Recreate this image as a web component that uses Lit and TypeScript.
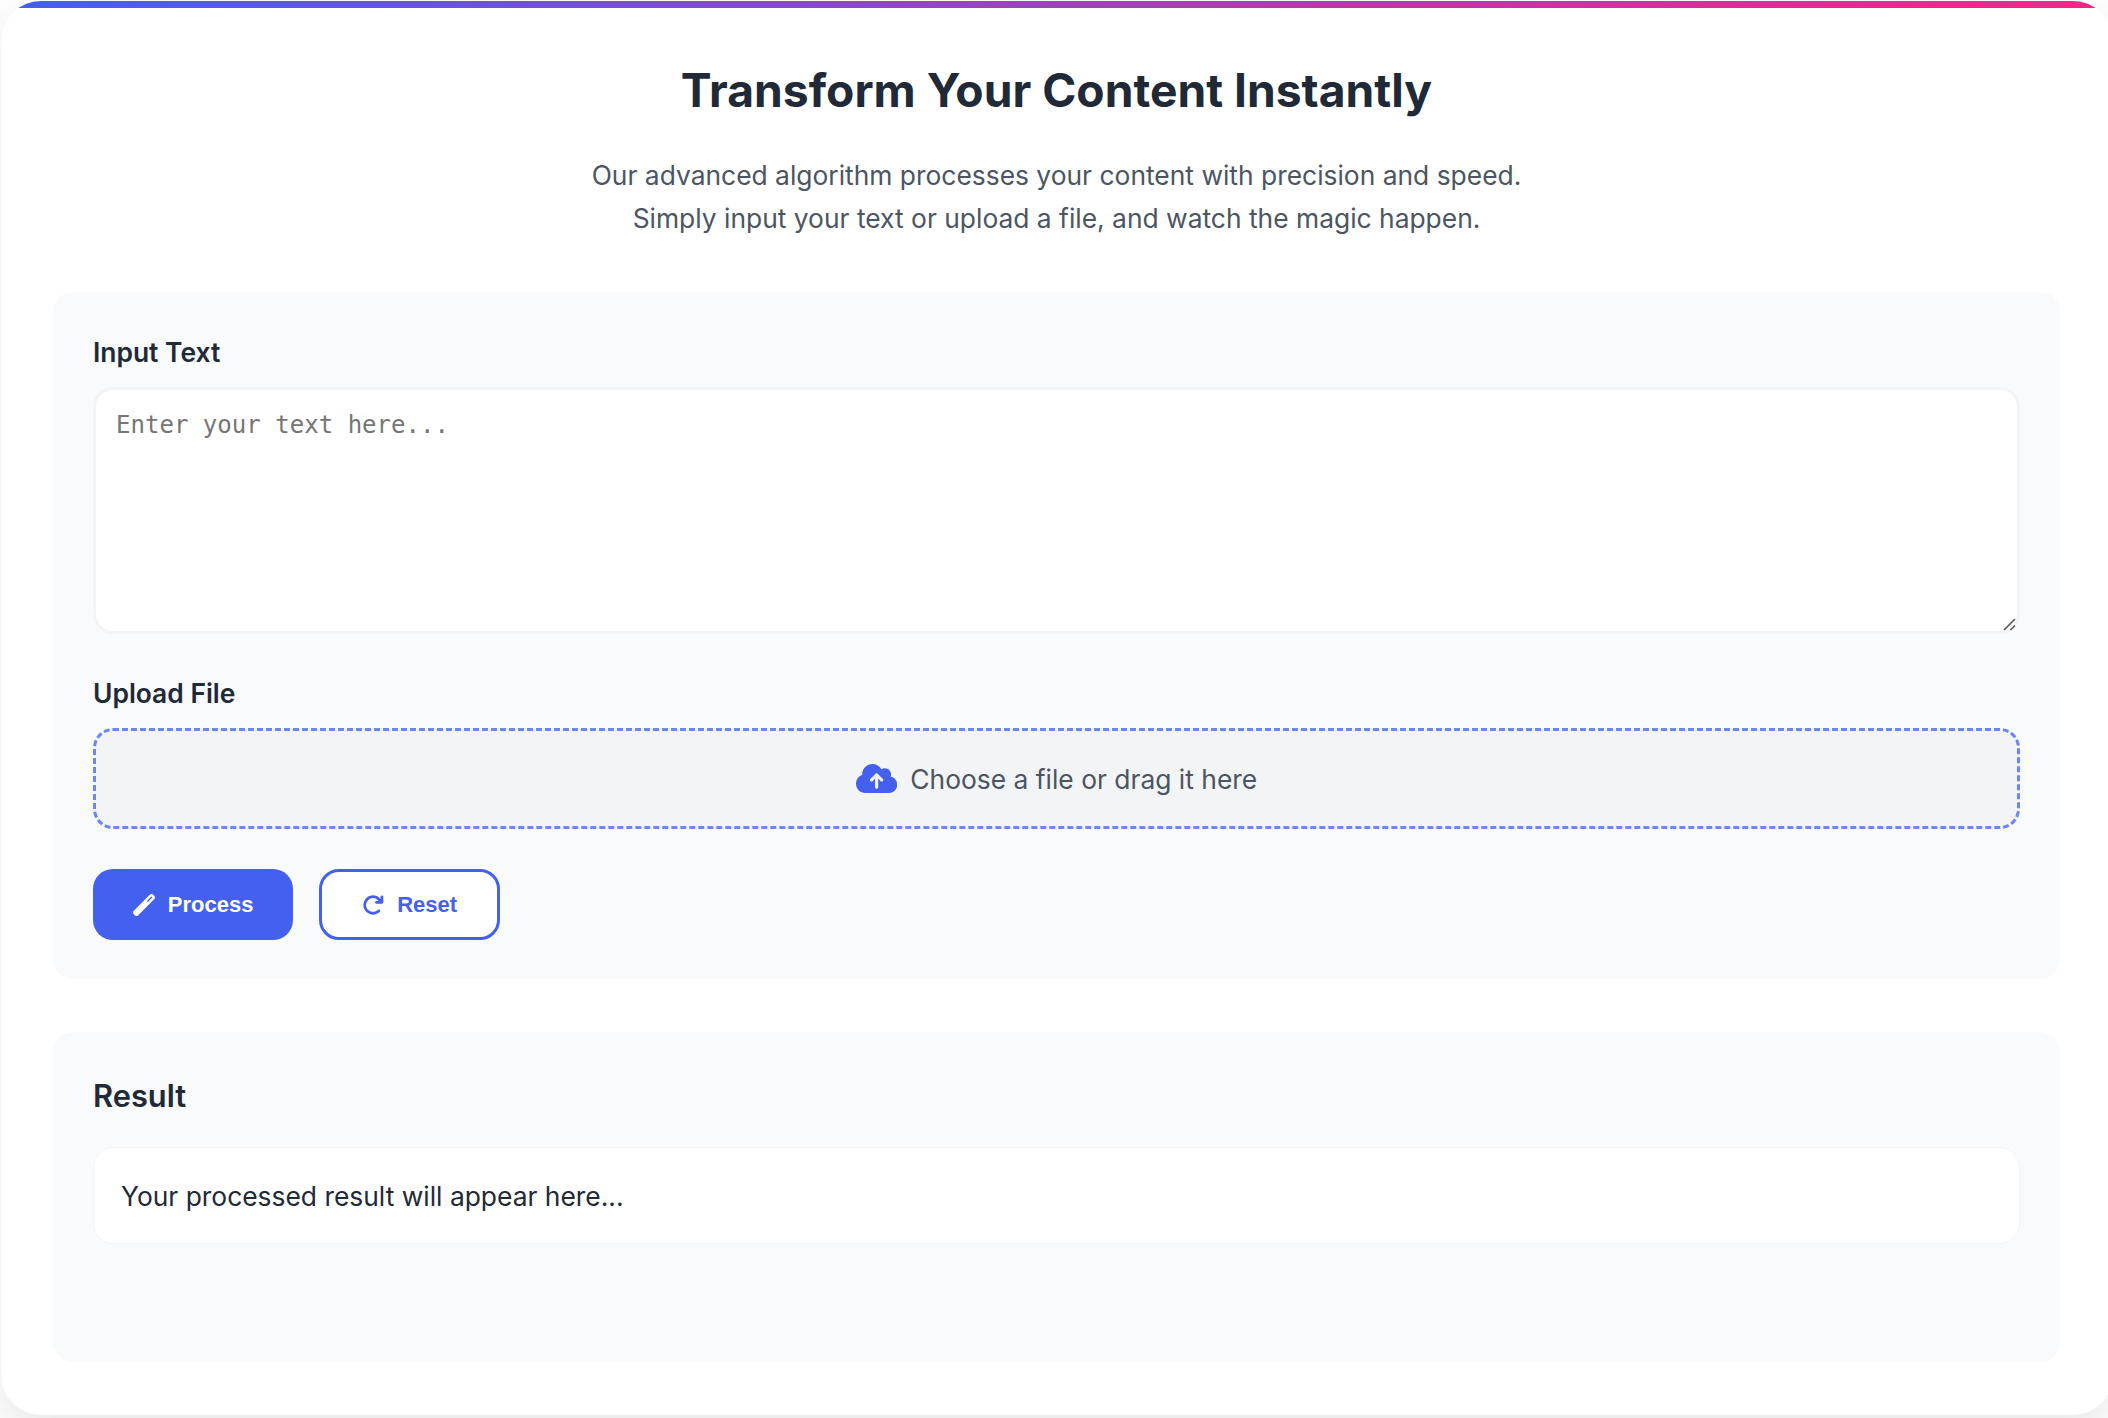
import { LitElement, html, css } from "lit";
import { customElement } from "lit/decorators.js";

@customElement("app-root")
export class AppRoot extends LitElement {
  static styles = css`
    :host {
      display: block;
      height: 1418px;
      overflow: hidden;
      box-sizing: border-box;
      padding: 1px 0 0 1px;
      background: #fff;
      color: #1f2937;
      font-family: Inter, "Liberation Sans", sans-serif;
      font-size: 26.4px;
      line-height: 43px;
    }
    * {
      box-sizing: border-box;
    }
    .card {
      width: 2112px;
      height: 1414px;
      border-radius: 40px;
      background: linear-gradient(90deg, #4361ee, #f72585) top / 100% 7px no-repeat #fff;
      box-shadow: 0 17px 50px rgba(0, 0, 0, 0.1);
      padding: 52px 53px 52px 52px;
      display: flex;
      flex-direction: column;
    }
    .header {
      height: 239px;
      text-align: center;
      color: #4b5563;
    }
    .title {
      margin: 0 0 36px;
      padding-top: 9px;
      font-size: 46.2px;
      line-height: 56px;
      font-weight: 700;
      color: #1f2937;
    }
    .text {
      margin: 0;
    }
    .panel {
      background: #f9fafc;
      border-radius: 20px;
      padding: 39px 40px;
    }
    .form {
      height: 687px;
      margin-bottom: 53px;
    }
    .result {
      height: 330px;
      padding-top: 40px;
    }
    .label {
      display: block;
      font-weight: 600;
      line-height: 42px;
      margin-bottom: 14px;
    }
    .field {
      position: relative;
      height: 247px;
      margin-bottom: 38px;
    }
    .area {
      display: block;
      width: 100%;
      height: 100%;
      margin: 0;
      padding: 20px;
      border: 3px solid #f3f4f6;
      border-radius: 20px;
      background: #fff;
      font-family: "DejaVu Sans Mono", monospace;
      font-size: 24.05px;
      line-height: 31px;
      resize: none;
      outline: none;
    }
    .area::placeholder {
      color: #757575;
    }
    .grip {
      position: absolute;
      right: 4px;
      bottom: 3px;
      width: 13px;
      height: 13px;
      fill: none;
      stroke: #5a5a5a;
      stroke-width: 1.6;
    }
    .drop {
      display: flex;
      align-items: center;
      justify-content: center;
      gap: 13.2px;
      height: 101px;
      border: 3px dashed #6c86f5;
      border-radius: 20px;
      background: #f3f4f6;
      color: #4b5563;
    }
    .hint {
      padding-top: 2px;
    }
    .cloud {
      width: 41.25px;
      height: 33px;
      fill: #4361ee;
    }
    .actions {
      display: flex;
      gap: 26px;
      margin-top: 40px;
    }
    .btn {
      display: flex;
      align-items: center;
      justify-content: center;
      gap: 13.2px;
      height: 71px;
      width: 200px;
      padding: 0;
      border: 0;
      border-radius: 20px;
      background: #4361ee;
      color: #fff;
      font: 700 22px "Liberation Sans", Arial, sans-serif;
    }
    .outline {
      width: 181px;
      border: 3px solid #4361ee;
      background: #fff;
      color: #4361ee;
    }
    .glyph {
      width: 22px;
      height: 22px;
      fill: currentColor;
    }
    .subtitle {
      margin: 0 0 27px;
      font-size: 30.8px;
      line-height: 48px;
      font-weight: 600;
    }
    .output {
      height: 97px;
      padding: 27px 27px 25px;
      border: 1px solid #f3f4f6;
      border-radius: 20px;
      background: #fff;
    }
  `;

  render() {
    return html`
      <main class="card">
        <header class="header">
          <h1 class="title">Transform Your Content Instantly</h1>
          <p class="text">
            Our advanced algorithm processes your content with precision and speed.<br />
            Simply input your text or upload a file, and watch the magic happen.
          </p>
        </header>
        <section class="panel form">
          <label class="label" for="source">Input Text</label>
          <div class="field">
            <textarea class="area" id="source" placeholder="Enter your text here..."></textarea>
            <svg class="grip" viewBox="0 0 13 13"><path d="M1 12L12 1M7.5 12L12 7.5" /></svg>
          </div>
          <span class="label">Upload File</span>
          <div class="drop">
            <svg class="cloud" viewBox="0 0 640 512"><path d="M144 480C64.5 480 0 415.5 0 336c0-62.8 40.2-116.2 96.2-135.9c-.1-2.7-.2-5.4-.2-8.1c0-88.4 71.6-160 160-160c59.3 0 111 32.2 138.7 80.2C409.9 102 428.3 96 448 96c53 0 96 43 96 96c0 12.2-2.3 23.8-6.4 34.6C596 238.4 640 290.1 640 352c0 70.7-57.3 128-128 128H144zm79-217c-9.4 9.4-9.4 24.6 0 33.9s24.6 9.4 33.9 0l39-39V392c0 13.3 10.7 24 24 24s24-10.7 24-24V257.9l39 39c9.4 9.4 24.6 9.4 33.9 0s9.4-24.6 0-33.9l-80-80c-9.4-9.4-24.6-9.4-33.9 0l-80 80z" /></svg>
            <span class="hint">Choose a file or drag it here</span>
          </div>
          <div class="actions">
            <button class="btn">
              <svg class="glyph" viewBox="0 0 512 512"><path d="M14.1 463.3c-18.7-18.7-18.7-49.1 0-67.9L395.4 14.1c18.7-18.7 49.1-18.7 67.9 0l34.6 34.6c18.7 18.7 18.7 49.1 0 67.9L116.5 497.9c-18.7 18.7-49.1 18.7-67.9 0L14.1 463.3zM347.6 187.6l105-105L429.4 59.3l-105 105 23.3 23.3z" /></svg>
              <span>Process</span>
            </button>
            <button class="btn outline">
              <svg class="glyph" viewBox="0 0 512 512"><path d="M386.3 160H336c-17.7 0-32 14.3-32 32s14.3 32 32 32H464c17.7 0 32-14.3 32-32V64c0-17.7-14.3-32-32-32s-32 14.3-32 32v51.2L414.4 97.6c-87.5-87.5-229.3-87.5-316.8 0s-87.5 229.3 0 316.8s229.3 87.5 316.8 0c12.5-12.5 12.5-32.8 0-45.3s-32.8-12.5-45.3 0c-62.5 62.5-163.8 62.5-226.3 0s-62.5-163.8 0-226.3s163.8-62.5 226.3 0L386.3 160z" /></svg>
              <span>Reset</span>
            </button>
          </div>
        </section>
        <section class="panel result">
          <h2 class="subtitle">Result</h2>
          <div class="output">Your processed result will appear here...</div>
        </section>
      </main>
    `;
  }
}
